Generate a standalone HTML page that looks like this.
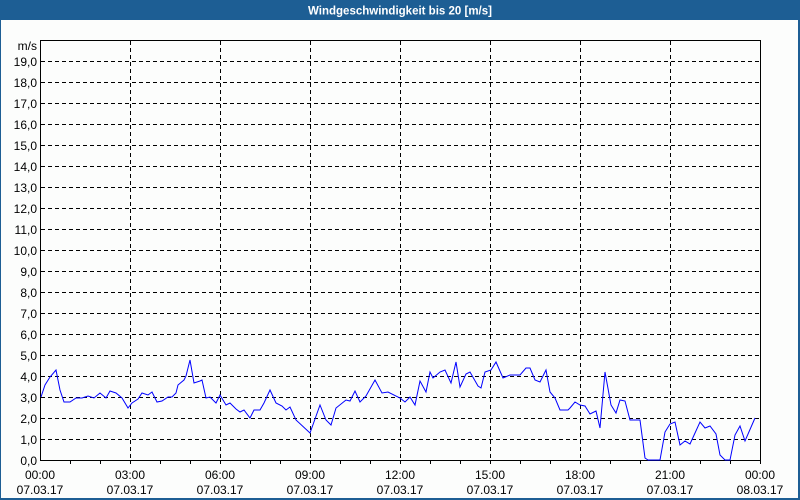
<!DOCTYPE html>
<html><head><meta charset="utf-8"><style>
html,body{margin:0;padding:0;width:800px;height:500px;overflow:hidden;background:#fcfdfc}
</style></head><body>
<svg width="800" height="500" xmlns="http://www.w3.org/2000/svg" font-family="Liberation Sans, sans-serif" font-size="12">
<rect x="0" y="0" width="800" height="500" fill="#fcfdfc"/>
<rect x="0.5" y="0.5" width="798" height="498" fill="none" stroke="#1d5e94" stroke-width="1"/>
<rect x="798" y="0" width="2" height="500" fill="#1d5e94"/>
<rect x="0" y="498" width="800" height="2" fill="#1d5e94"/>
<rect x="0" y="0" width="800" height="20" fill="#1d5e94"/>
<text x="400" y="14.5" fill="#fff" font-weight="bold" text-anchor="middle" font-size="11.5">Windgeschwindigkeit bis 20 [m/s]</text>
<g stroke="#000" stroke-width="1" stroke-dasharray="4,3" fill="none">
<path d="M41 439.5H760M41 418.5H760M41 397.5H760M41 376.5H760M41 355.5H760M41 334.5H760M41 313.5H760M41 292.5H760M41 271.5H760M41 250.5H760M41 229.5H760M41 208.5H760M41 187.5H760M41 166.5H760M41 145.5H760M41 124.5H760M41 103.5H760M41 82.5H760M41 61.5H760"/>
<path d="M130.5 41V460M220.5 41V460M310.5 41V460M400.5 41V460M490.5 41V460M580.5 41V460M670.5 41V460"/>
</g>
<rect x="40.5" y="40.5" width="720" height="420" fill="none" stroke="#000" stroke-width="1"/>
<path stroke="#000" fill="none" d="M70.5 461v3M100.5 461v3M130.5 461v3M160.5 461v3M190.5 461v3M220.5 461v3M250.5 461v3M280.5 461v3M310.5 461v3M340.5 461v3M370.5 461v3M400.5 461v3M430.5 461v3M460.5 461v3M490.5 461v3M520.5 461v3M550.5 461v3M580.5 461v3M610.5 461v3M640.5 461v3M670.5 461v3M700.5 461v3M730.5 461v3M760.5 461v3"/>
<g fill="#000" text-anchor="end">
<text x="37" y="50">m/s</text>
<text x="37" y="465">0,0</text><text x="37" y="444">1,0</text><text x="37" y="423">2,0</text><text x="37" y="402">3,0</text><text x="37" y="381">4,0</text><text x="37" y="360">5,0</text><text x="37" y="339">6,0</text><text x="37" y="318">7,0</text><text x="37" y="297">8,0</text><text x="37" y="276">9,0</text><text x="37" y="255">10,0</text><text x="37" y="234">11,0</text><text x="37" y="213">12,0</text><text x="37" y="192">13,0</text><text x="37" y="171">14,0</text><text x="37" y="150">15,0</text><text x="37" y="129">16,0</text><text x="37" y="108">17,0</text><text x="37" y="87">18,0</text><text x="37" y="66">19,0</text>
</g>
<g fill="#000" text-anchor="middle">
<text x="40" y="479">00:00</text><text x="40" y="494">07.03.17</text>
<text x="130" y="479">03:00</text><text x="130" y="494">07.03.17</text>
<text x="220" y="479">06:00</text><text x="220" y="494">07.03.17</text>
<text x="310" y="479">09:00</text><text x="310" y="494">07.03.17</text>
<text x="400" y="479">12:00</text><text x="400" y="494">07.03.17</text>
<text x="490" y="479">15:00</text><text x="490" y="494">07.03.17</text>
<text x="580" y="479">18:00</text><text x="580" y="494">07.03.17</text>
<text x="670" y="479">21:00</text><text x="670" y="494">07.03.17</text>
<text x="760" y="479">00:00</text><text x="760" y="494">08.03.17</text>
</g>
<polyline fill="none" stroke="#0000ff" stroke-width="1" points="41,397 45,385 50,377 56,370 60,390 64,402 70,402 76,398 82,398 88,396 94,398 100,393 106,398 110,391 116,393 122,398 128,408 132,403 138,399 142,393 148,395 152,392 157,402 162,401 168,397 172,397 176,393 178,385 184,380 186,376 190,360 194,383 200,381 202,380 206,398 210,397 216,403 220,395 226,405 230,403 236,409 240,412 244,410 250,418 254,410 260,410 264,403 270,390 276,403 282,406 286,410 290,407 296,420 310,433 320,405 326,420 331,425 336,408 346,400 350,401 355,391 360,402 366,396 375,380 382,393 388,392 400,398 405,402 410,397 415,405 420,381 426,392 430,372 433,378 440,372 445,370 451,383 456,362 460,387 466,374 470,372 478,386 481,388 485,372 491,370 496,362 503,378 510,375 520,375 526,368 530,368 535,380 540,382 546,370 550,392 555,398 560,410 568,410 570,408 575,402 580,405 585,406 590,414 596,411 600,428 605,372 611,405 616,413 620,400 625,401 630,420 640,420 645,458 648,460 660,460 665,432 670,424 675,422 680,445 685,441 690,444 700,422 705,428 710,426 716,434 720,455 725,460 730,460 735,435 740,426 745,441 755,418"/>
</svg>
</body></html>
